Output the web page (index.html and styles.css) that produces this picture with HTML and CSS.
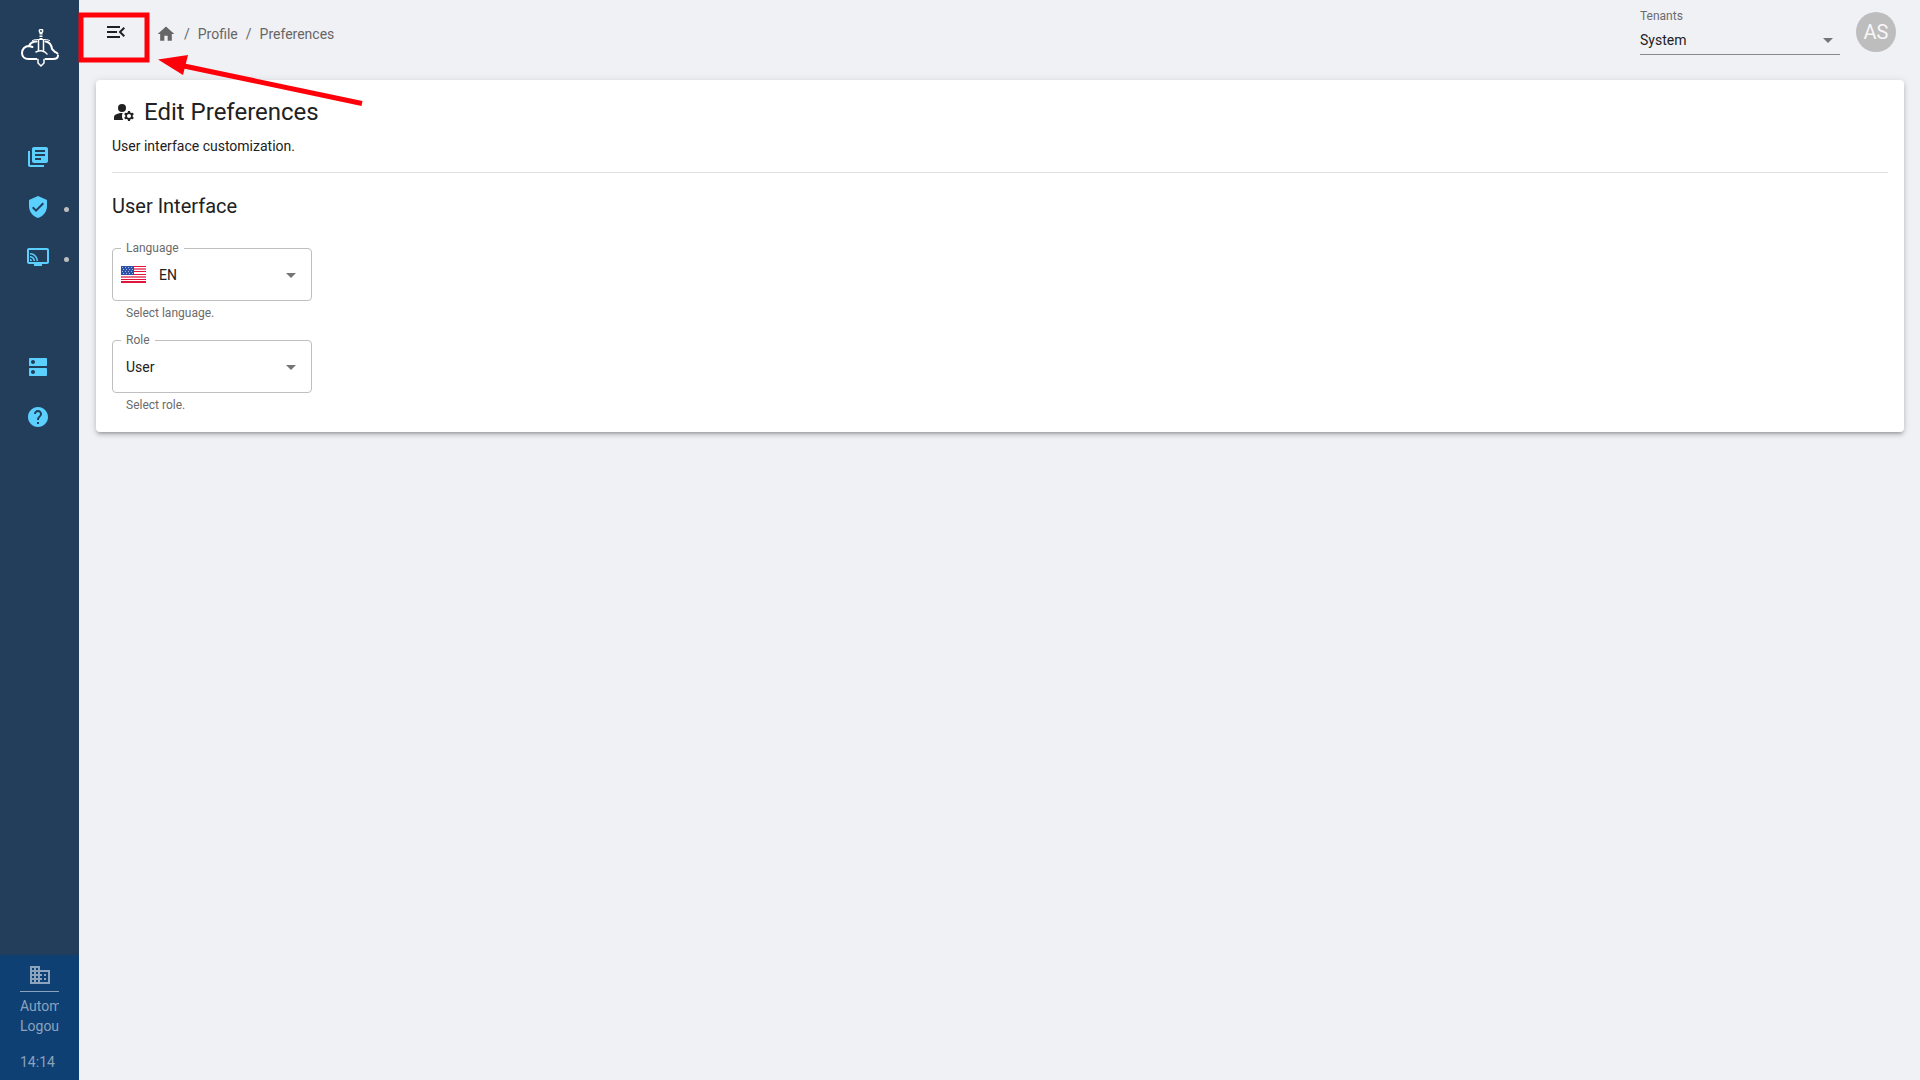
FILE: index.html
```html
<!DOCTYPE html>
<html lang="en">
<head>
<meta charset="UTF-8">
<meta name="viewport" content="width=device-width, initial-scale=1">
<title>Preferences</title>
<link rel="stylesheet" href="styles.css">
</head>
<body>

<div class="app">

  <aside class="sidebar">
    <a class="logo" href="#">
      <svg width="40" height="40" viewBox="0 0 40 40" fill="none" stroke="#fff" stroke-width="2" stroke-linecap="round" stroke-linejoin="round">
        <path d="M16.500 30H8.500C4.500 30 2 27.500 2 24C2 20 5 17 9 17C10.500 13.500 13 12.500 16.500 12.500M9 17L12.500 18"/>
        <path d="M25.500 30H33C36 30 38 28.500 38 26.500M37.500 24.500L35.500 23M25.500 12.500C29 13 31.500 16 32 20L35 23"/>
        <path stroke-width="1" d="M12.500 11.500C15 10.500 16 10.500 18.500 10.500H23.500C26 10.500 27 10.500 29.500 11.500"/>
        <path stroke-width="1.500" d="M18.500 11V21.500M23.500 11V21.500"/>
        <path stroke-width="1.500" d="M16 23C20 21 25 21.500 27 25M18 30.500V34L21 37L24 34V30.500"/>
        <circle stroke-width="1.500" cx="21" cy="2" r="1.700"/>
        <path stroke-width="3" stroke-linecap="butt" stroke-dasharray="1.500 1" d="M21 4V10"/>
      </svg>
    </a>

    <nav class="menu">
      <a class="menu-item" href="#" aria-label="Library">
        <svg class="icon" viewBox="0 0 24 24"><path d="M4 6H2v14c0 1.100.9 2 2 2h14v-2H4V6zm16-4H8c-1.100 0-2 .9-2 2v12c0 1.100.9 2 2 2h12c1.100 0 2-.9 2-2V4c0-1.100-.9-2-2-2zm-1 9H9V9h10v2zm-4 4H9v-2h6v2zm4-8H9V5h10v2z"/></svg>
      </a>
      <a class="menu-item has-more" href="#" aria-label="Security">
        <svg class="icon" viewBox="0 0 24 24"><path d="M12 1L3 5v6c0 5.550 3.840 10.740 9 12 5.160-1.260 9-6.450 9-12V5l-9-4zm-2 16l-4-4 1.410-1.410L10 14.170l6.590-6.590L18 9l-8 8z"/></svg>
      </a>
      <a class="menu-item has-more" href="#" aria-label="Monitoring">
        <svg class="icon" viewBox="0 0 24 24"><path d="M21 3H3c-1.100 0-2 .9-2 2v12c0 1.100.9 2 2 2h5v2h8v-2h5c1.100 0 2-.9 2-2V5c0-1.100-.9-2-2-2zm0 14H3V5h18v12z"/><path d="M4 14v2h2c0-1.110-.89-2-2-2zm0-3v1.430c1.970 0 3.570 1.600 3.570 3.570H9c0-2.760-2.240-5-5-5zm0-3v1.450c3.610 0 6.550 2.930 6.550 6.550H12c0-4.420-3.590-8-8-8z"/></svg>
      </a>
    </nav>

    <nav class="menu menu-second">
      <a class="menu-item" href="#" aria-label="Servers">
        <svg class="icon" viewBox="0 0 24 24"><path d="M20 13H4c-.55 0-1 .45-1 1v6c0 .55.45 1 1 1h16c.55 0 1-.45 1-1v-6c0-.55-.45-1-1-1zM7 19c-1.100 0-2-.9-2-2s.9-2 2-2 2 .9 2 2-.9 2-2 2zM20 3H4c-.55 0-1 .45-1 1v6c0 .55.45 1 1 1h16c.55 0 1-.45 1-1V4c0-.55-.45-1-1-1zM7 9c-1.100 0-2-.9-2-2s.9-2 2-2 2 .9 2 2-.9 2-2 2z"/></svg>
      </a>
      <a class="menu-item" href="#" aria-label="Help">
        <svg class="icon" viewBox="0 0 24 24"><path d="M12 2C6.480 2 2 6.480 2 12s4.480 10 10 10 10-4.480 10-10S17.520 2 12 2zm1 17h-2v-2h2v2zm2.070-7.750l-.9.920C13.450 12.900 13 13.500 13 15h-2v-.5c0-1.100.45-2.100 1.170-2.830l1.240-1.260c.37-.36.59-.86.59-1.410 0-1.100-.9-2-2-2s-2 .9-2 2H8c0-2.210 1.790-4 4-4s4 1.790 4 4c0 .88-.36 1.680-.93 2.250z"/></svg>
      </a>
    </nav>

    <div class="session">
      <svg class="icon" viewBox="0 0 24 24"><path d="M12 7V3H2v18h20V7H12zM6 19H4v-2h2v2zm0-4H4v-2h2v2zm0-4H4V9h2v2zm0-4H4V5h2v2zm4 12H8v-2h2v2zm0-4H8v-2h2v2zm0-4H8V9h2v2zm0-4H8V5h2v2zm10 12h-8v-2h2v-2h-2v-2h2v-2h-2V9h8v10zm-2-8h-2v2h2v-2zm0 4h-2v2h2v-2z"/></svg>
      <div class="session-text">Automatic<br>Logout</div>
      <div class="session-time">14:14</div>
    </div>
  </aside>

  <div class="page">
    <header class="topbar">
      <button class="menu-toggle" type="button" aria-label="Toggle menu">
        <svg class="icon" viewBox="0 0 24 24"><path d="M3 18h13v-2H3v2zm0-5h10v-2H3v2zm0-7v2h13V6H3zm18 9.590L17.420 12 21 8.410 19.590 7l-5 5 5 5L21 15.590z"/></svg>
      </button>
      <nav class="breadcrumbs">
        <a href="#" aria-label="Home"><svg class="icon-small" viewBox="0 0 24 24"><path d="M10 20v-6h4v6h5v-8h3L12 3 2 12h3v8z"/></svg></a>
        <span>/</span>
        <a href="#">Profile</a>
        <span>/</span>
        <a href="#">Preferences</a>
      </nav>
      <div class="tenant">
        <label for="tenant">Tenants</label>
        <select id="tenant">
          <option>System</option>
        </select>
        <svg class="arrow" viewBox="0 0 24 24"><path d="M7 10l5 5 5-5z"/></svg>
      </div>
      <button class="avatar" type="button">AS</button>
    </header>

    <main class="card">
      <h1 class="title">
        <svg class="icon" viewBox="0 0 24 24"><circle cx="10" cy="8" r="4"/><path d="M10.670 13.020c-.22-.01-.44-.02-.67-.02-2.420 0-4.680.67-6.610 1.820-.88.52-1.390 1.500-1.390 2.530V20h9.260c-.79-1.130-1.260-2.510-1.260-4 0-1.070.25-2.070.67-2.980zM20.750 16c0-.22-.03-.42-.06-.63l1.140-1.010-1-1.730-1.450.49c-.32-.27-.68-.48-1.080-.63L18 11h-2l-.3 1.490c-.4.150-.76.360-1.080.63l-1.450-.49-1 1.730 1.140 1.010c-.03.210-.06.410-.06.630s.03.420.06.630l-1.140 1.010 1 1.730 1.450-.49c.32.270.68.480 1.080.630L16 21h2l.3-1.490c.4-.15.760-.36 1.080-.63l1.450.49 1-1.730-1.140-1.010c.03-.210.060-.410.060-.630zM17 18c-1.100 0-2-.9-2-2s.9-2 2-2 2 .9 2 2-.9 2-2 2z"/></svg>
        Edit Preferences
      </h1>
      <p class="subtitle">User interface customization.</p>

      <h2 class="section-title">User Interface</h2>

      <div class="field">
        <div class="field-box">
          <label for="language">Language</label>
          <svg class="flag" width="25" height="17" viewBox="0 0 25 17" shape-rendering="crispEdges">
            <rect width="25" height="17" fill="#fff"/>
            <path fill="#e0143c" d="M0 0h25v1H0zM0 5h25v1H0zM0 8h25v1H0zM0 13h25v1H0zM0 15h25v2H0z"/>
            <path fill="#ec6f88" d="M0 2h25v2H0zM0 10h25v2H0z"/>
            <rect width="13" height="9" fill="#2e51a8"/>
            <path stroke="#a5b6dc" stroke-dasharray="1 2" d="M1 1.500h11M2 3.500h10M1 5.500h11M2 7.500h10"/>
          </svg>
          <select id="language" class="with-flag">
            <option>EN</option>
          </select>
          <svg class="arrow" viewBox="0 0 24 24"><path d="M7 10l5 5 5-5z"/></svg>
        </div>
        <p class="helper">Select language.</p>
      </div>

      <div class="field">
        <div class="field-box">
          <label for="role">Role</label>
          <select id="role">
            <option>User</option>
          </select>
          <svg class="arrow" viewBox="0 0 24 24"><path d="M7 10l5 5 5-5z"/></svg>
        </div>
        <p class="helper">Select role.</p>
      </div>
    </main>
  </div>

</div>

<!-- red box and arrow pointing at the menu button -->
<svg class="callout" width="370" height="120" viewBox="0 0 370 120">
  <rect x="81" y="15" width="66" height="45" fill="none" stroke="#ff000a" stroke-width="5"/>
  <path d="M184 66L362 103.500" stroke="#ff000a" stroke-width="5"/>
  <path d="M158 59.500L188 55L183 75z" fill="#ff000a"/>
</svg>

</body>
</html>
```
FILE: styles.css
```css
* {
  box-sizing: border-box;
}

body {
  margin: 0;
  background-color: #f0f1f5;
  color: #212121;
  font-family: Roboto, "Liberation Sans", sans-serif;
  font-size: 14px;
  line-height: 20px;
}

h1, h2, p {
  margin: 0;
  font-weight: 400;
}

a {
  color: inherit;
  text-decoration: none;
}

button, select {
  border: none;
  background: none;
  color: inherit;
  font: inherit;
  appearance: none;
}

.icon, .arrow {
  display: block;
  flex: none;
  width: 24px;
  height: 24px;
  fill: currentColor;
}

.icon-small {
  display: block;
  width: 20px;
  height: 20px;
  fill: currentColor;
}

.app {
  display: flex;
  min-height: 100vh;
}

/* sidebar */
.sidebar {
  display: flex;
  flex-direction: column;
  flex: none;
  width: 79px;
  background-color: #233e5b;
}

.logo {
  height: 132px;
  padding: 29px 0 0 20px;
}

.menu {
  color: #5bd0ff;
}

.menu-second {
  margin-top: 60px;
}

.menu-item {
  display: flex;
  align-items: center;
  height: 50px;
  padding-left: 26px;
}

.has-more::after {
  content: "";
  width: 5px;
  height: 5px;
  margin: 4px 0 0 14px;
  border-radius: 50%;
  background-color: #bdbdbd;
}

.session {
  display: flex;
  flex-direction: column;
  align-items: center;
  margin-top: auto;
  padding: 8px 20px;
  background-color: #0f4074;
  color: #8ba3bd;
}

.session-text {
  width: 100%;
  margin-top: 4px;
  padding-top: 4px;
  border-top: 1px solid #8ba3bd;
  overflow: hidden;
}

.session-time {
  width: 100%;
  margin-top: 16px;
}

/* top bar */
.page {
  flex: 1;
  padding: 0 16px 0 17px;
}

.topbar {
  display: flex;
  align-items: flex-start;
  height: 80px;
  padding: 8px 8px 0 0;
}

.menu-toggle {
  padding: 12px 8px;
}

.breadcrumbs {
  display: flex;
  align-items: center;
  gap: 8px;
  margin: 16px 0 0 20px;
  color: #666;
}

.tenant {
  position: relative;
  width: 200px;
  margin-left: auto;
}

.tenant label {
  display: block;
  color: #6b6b6e;
  font-size: 12px;
  line-height: 16px;
}

.tenant select {
  display: block;
  width: 100%;
  height: 31px;
  padding: 2px 0 0;
  border-bottom: 1px solid #88898c;
}

.arrow {
  position: absolute;
  right: 8px;
  top: 14px;
  color: #757575;
  pointer-events: none;
}

.tenant .arrow {
  right: 0;
  top: 20px;
}

.avatar {
  width: 40px;
  height: 40px;
  margin: 4px 0 0 16px;
  padding: 0;
  border-radius: 50%;
  background-color: #bdbdbd;
  color: #f7f7f9;
  font-size: 20px;
}

/* card */
.card {
  padding: 16px;
  border-radius: 4px;
  background-color: #fff;
  box-shadow: 0 3px 3px -2px rgba(0,0,0,.2), 0 3px 4px 0 rgba(0,0,0,.14), 0 1px 8px 0 rgba(0,0,0,.12);
}

.title {
  display: flex;
  align-items: center;
  gap: 8px;
  font-size: 24px;
  line-height: 32px;
}

.subtitle {
  padding: 8px 0 16px;
  border-bottom: 1px solid #e0e0e0;
}

.section-title {
  padding: 17px 0 26px;
  font-size: 20px;
  line-height: 32px;
}

.field {
  width: 200px;
  padding-bottom: 3px;
}

.field + .field {
  margin-top: 16px;
}

.field-box {
  position: relative;
  height: 53px;
  border: 1px solid #bfbfbf;
  border-radius: 4px;
}

.field-box label {
  position: absolute;
  left: 8px;
  top: -9px;
  padding: 0 5px;
  background-color: #fff;
  color: #6b6b6b;
  font-size: 12px;
  line-height: 16px;
}

.field-box select {
  width: 100%;
  height: 100%;
  padding: 0 32px 0 13px;
}

.field-box .with-flag {
  padding-left: 46px;
}

.flag {
  position: absolute;
  left: 8px;
  top: 17px;
}

.helper {
  padding: 4px 14px 0;
  color: #6b6b6b;
  font-size: 12px;
  line-height: 16px;
}

.callout {
  position: absolute;
  left: 0;
  top: 0;
  pointer-events: none;
}
```
